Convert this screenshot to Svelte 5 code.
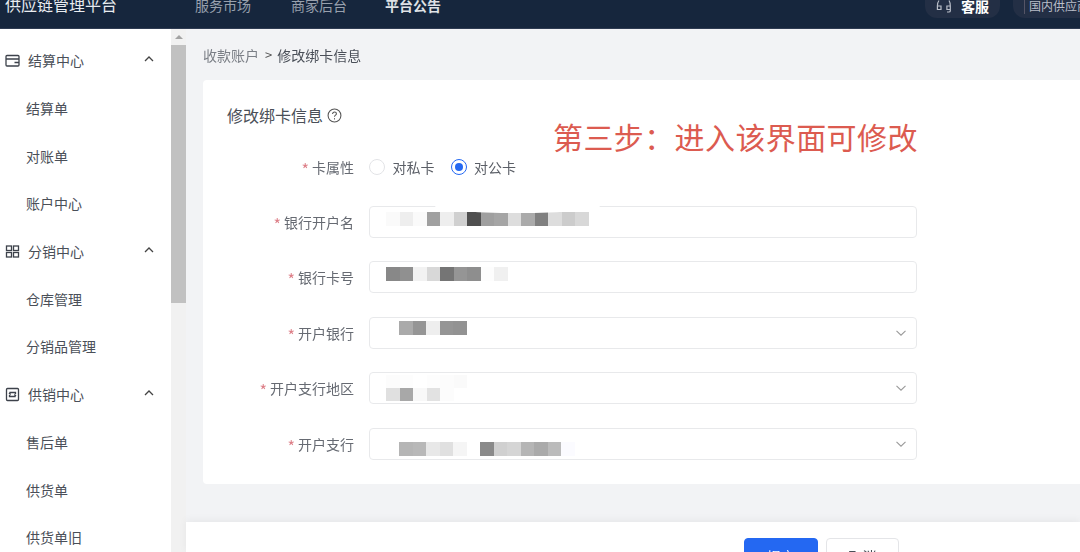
<script>
  const nav = [
    { type: 'group', icon: 'card', text: '结算中心' },
    { type: 'item', text: '结算单' },
    { type: 'item', text: '对账单' },
    { type: 'item', text: '账户中心' },
    { type: 'group', icon: 'grid', text: '分销中心' },
    { type: 'item', text: '仓库管理' },
    { type: 'item', text: '分销品管理' },
    { type: 'group', icon: 'sync', text: '供销中心' },
    { type: 'item', text: '售后单' },
    { type: 'item', text: '供货单' },
    { type: 'item', text: '供货单旧' }
  ];
  const fields = [
    { label: '银行开户名', pad: 16, top: 5, h: 14, rows: [['#fafafa','#eeeeee','#fafafa','#a0a0a0','#eeeeee','#d0d0d0','#4f4f4f','#9f9f9f','#a5a5a5','#dddddd','#aaaaaa','#808080','#dddddd','#cccccc','#d8d8d8']], smudge: true },
    { label: '银行卡号', pad: 16, top: 5, h: 14, rows: [['#888888','#909090','#f2f2f2','#d8d8d8','#757575','#959595','#8e8e8e','#fdfdfd','#f0f0f0']] },
    { label: '开户银行', pad: 29, top: 3, h: 14, select: true, rows: [['#aaaaaa','#959595','#eeeeee','#959595','#929292']] },
    { label: '开户支行地区', pad: 16, top: 2, h: 13, select: true, rows: [['#fcfcfc','#fdfdfd','#ffffff','#fdfdfd','#fcfcfc','#fafafa'],['#e0e0e0','#a8a8a8','#f8f8f8','#e2e2e2','#fcfcfc']] },
    { label: '开户支行', pad: 29, top: 13, h: 14, select: true, rows: [['#b5b5b5','#b8b8b8','#e8e8e8','#e0e0e0','#f5f5f5','#ffffff','#8a8a8a','#d0d0d0','#d5d5d5','#b5b5b5','#aaaaaa','#bbbbbb','#fbfbff']] }
  ];
</script>

<div class="page">
  <header class="topbar">
    <div class="brand">供应链管理平台</div>
    <nav class="topnav">
      <span>服务市场</span>
      <span>商家后台</span>
      <span class="active">平台公告</span>
    </nav>
    <div class="pill service">
      <svg width="16" height="14" viewBox="0 0 16 14" fill="none" stroke="#b9bec8" stroke-width="1.2"><path d="M3 1.500C1.800 3 1.400 5 1.400 7v3.500h3.600V7H1.600M13 1.500c1 1.500 1.300 3.500 1.300 5.500v5c0 .8-.6 1-1.500 1H11M14.300 7h-3.400v3.500h3.400"/></svg>
      <b>客服</b>
    </div>
    <div class="pill region"><span>国内供应商</span></div>
  </header>

  <div class="body">
    <aside class="sidebar">
      {#each nav as n}
        {#if n.type === 'group'}
          <div class="row group">
            <svg class="gicon" width="15" height="15" viewBox="0 0 15 15" fill="none" stroke="#3d424b" stroke-width="1.300">
              {#if n.icon === 'card'}
                <rect x="1" y="2.500" width="13" height="10.500" rx="1"/><path d="M1 6h13M9.500 9.500H14"/>
              {:else if n.icon === 'grid'}
                <rect x="1.500" y="2" width="5" height="4.500"/><rect x="8.500" y="2" width="5" height="4.500"/><rect x="1.500" y="8.500" width="5" height="4.500"/><rect x="8.500" y="8.500" width="5" height="4.500"/>
              {:else}
                <rect x="1.500" y="1.500" width="12" height="12" rx="1"/><path d="M10.500 7V5.500H5V7l-1-1M4.500 8v1.500H10V8l1 1"/>
              {/if}
            </svg>
            <span>{n.text}</span>
            <svg class="chev" width="10" height="6" viewBox="0 0 10 6" fill="none" stroke="#444" stroke-width="1.300"><path d="M1 5l4-4 4 4"/></svg>
          </div>
        {:else}
          <div class="row item">{n.text}</div>
        {/if}
      {/each}
    </aside>

    <div class="scrollbar">
      <div class="arrow"></div>
      <div class="thumb"></div>
    </div>

    <main class="main">
      <div class="crumbs"><span class="c1">收款账户</span><span class="sep">&gt;</span><span class="c2">修改绑卡信息</span></div>

      <section class="card">
        <h2 class="title">修改绑卡信息
          <svg width="15" height="15" viewBox="0 0 14 14" fill="none" stroke="#555" stroke-width="1"><circle cx="7" cy="7" r="6"/><path d="M5.200 5.500C5.200 4.400 6 3.800 7 3.800s1.800.7 1.800 1.600c0 1.300-1.800 1.300-1.800 2.800"/><path d="M7 9.500v1.200"/></svg>
        </h2>
        <div class="annotation">第三步：进入该界面可修改</div>

        <div class="form">
          <div class="frow radio-row">
            <div class="label"><i>*</i>卡属性</div>
            <div class="radio"><span class="dot"></span>对私卡</div>
            <div class="radio on"><span class="dot"></span>对公卡</div>
          </div>
          {#each fields as f}
            <div class="frow">
              <div class="label"><i>*</i>{f.label}</div>
              <div class="input" style="padding-left:{f.pad}px;padding-top:{f.top}px">
                {#if f.smudge}<span class="smudge"></span>{/if}
                {#each f.rows as r}
                  <div class="mask" style="height:{f.h}px">
                    {#each r as c}<span class="cell" style="background:{c}"></span>{/each}
                  </div>
                {/each}
                {#if f.select}
                  <svg class="down" width="10" height="6" viewBox="0 0 10 6" fill="none" stroke="#9a9a9a" stroke-width="1.100"><path d="M.5.800L5 5.200 9.500.800"/></svg>
                {/if}
              </div>
            </div>
          {/each}
        </div>
      </section>

      <footer class="footer">
        <button class="btn primary">提交</button>
        <button class="btn">取消</button>
      </footer>
    </main>
  </div>
</div>

<style>
  :global(body) { margin: 0; background: #f2f3f5; }
  .page {
    width: 1080px; height: 552px; overflow: hidden;
    font-family: "Noto Sans CJK SC", "Noto Sans", sans-serif;
    color: #4a4f58; filter: blur(0.4px);
    display: flex; flex-direction: column;
  }
  .topbar {
    height: 29px; flex: none; background: #16263d; overflow: hidden;
    display: flex; align-items: flex-start; box-sizing: border-box;
    border-bottom: 1px solid #2e3b52;
  }
  .brand { width: 195px; flex: none; padding-left: 5px; box-sizing: border-box; color: #e9ecf0; font-size: 16px; line-height: 24px; margin-top: -8px; white-space: nowrap; }
  .topnav { display: flex; flex: none; gap: 40px; margin-top: -7px; font-size: 14px; line-height: 24px; color: #98a0ad; white-space: nowrap; }
  .topnav .active { color: #dfe2e6; font-weight: 700; margin-left: -2px; }
  .pill { background: #232f45; height: 30px; margin-top: -12px; border-radius: 12px; display: flex; align-items: center; box-sizing: border-box; flex: none; white-space: nowrap; }
  .service { width: 75px; margin-left: 484px; padding: 6px 0 0 11px; gap: 9px; color: #fff; font-size: 14px; }
  .region { width: 90px; margin-left: 13px; padding: 4px 0 0 12px; color: #b9bec8; font-size: 12px; }
  .region span { border-left: 1px solid #556; padding-left: 4px; margin-left: -1px; }

  .body { flex: 1; display: flex; min-height: 0; }
  .sidebar { width: 171px; flex: none; background: #fff; padding-top: 7.500px; box-sizing: border-box; overflow: hidden; }
  .row { height: 47.700px; display: flex; align-items: center; font-size: 14px; white-space: nowrap; }
  .group { padding: 0 17px 0 5px; }
  .group span { margin-left: 8px; }
  .gicon { flex: none; }
  .chev { margin-left: auto; margin-top: -2px; }
  .item { padding-left: 26px; }

  .scrollbar { width: 15px; flex: none; background: #f1f1f1; display: flex; flex-direction: column; }
  .arrow { height: 16px; position: relative; flex: none; }
  .arrow::after {
    content: ""; position: absolute; left: 4px; top: 6px;
    border: 4px solid transparent; border-top: 0; border-bottom: 4px solid #a3a3a3;
  }
  .thumb { height: 258px; background: #c1c1c1; }

  .main { flex: 1; min-width: 0; min-height: 0; display: flex; flex-direction: column; }
  .crumbs { height: 51px; flex: none; padding: 0 0 0 17px; box-sizing: border-box; display: flex; align-items: center; font-size: 14px; }
  .c1 { color: #7b7f86; }
  .sep { margin: 0 5px 0 6px; color: #555; font-size: 13px; }
  .c2 { color: #4a4f58; }

  .card {
    position: relative; margin-left: 17px; height: 404px; flex: none;
    background: #fff; border-radius: 4px 0 0 4px;
    box-sizing: border-box; padding: 22px 0 0 24px;
  }
  .title { margin: 0; font-size: 16px; font-weight: 400; line-height: 26px; color: #4a4f58; display: flex; align-items: center; gap: 4px; }
  .annotation {
    position: absolute; left: 350px; top: 34px;
    font-size: 30px; line-height: 44px; letter-spacing: 0.4px; color: #dc5b50; white-space: nowrap;
  }
  .form { margin-top: 26px; margin-left: -24px; }
  .frow { display: flex; align-items: center; height: 55.500px; }
  .radio-row { height: 26px; margin-bottom: 14px; }
  .label { width: 151px; flex: none; text-align: right; font-size: 14px; color: #666a72; white-space: nowrap; }
  .label i { color: #dd7f88; font-style: normal; margin-right: 3px; font-size: 16px; line-height: 14px; vertical-align: -3px; }
  .radio { display: flex; align-items: center; gap: 7.500px; font-size: 14px; color: #5a5e66; margin-left: 15px; margin-right: 1px; }
  .dot { width: 14px; height: 14px; border: 1px solid #e2e3e6; border-radius: 50%; position: relative; }
  .on .dot { border-color: #2468f2; }
  .on .dot::after { content: ""; position: absolute; inset: 3px; background: #2468f2; border-radius: 50%; }

  .input {
    position: relative; margin-left: 15px; width: 548px; height: 32px; box-sizing: border-box;
    border: 1px solid #e8e9eb; border-radius: 4px; background: #fff; display: flex; flex-direction: column; align-items: flex-start;
  }
  .mask { display: flex; flex: none; }
  .cell { width: 13.500px; flex: none; }
  .smudge {
    position: absolute; left: 65px; top: -8px; width: 165px; height: 14px;
    background: #fff; border-radius: 50%;
  }
  .down { position: absolute; right: 10px; top: 12px; }

  .footer {
    margin-top: 38px; height: 30px; flex: none; overflow: hidden; background: #fff; box-shadow: 0 -2px 8px rgba(0,0,0,.05);
    display: flex; align-items: flex-start; gap: 8px; padding: 16px 0 0 558px; box-sizing: border-box;
  }
  .btn {
    width: 73px; height: 36px; border: 1px solid #e4e5e8; border-radius: 4px; background: #fff; flex: none;
    font: inherit; font-size: 14px; color: #4a4f58; padding: 0;
  }
  .primary { background: #2468f2; border-color: #2468f2; color: #fff; width: 74px; }
</style>
